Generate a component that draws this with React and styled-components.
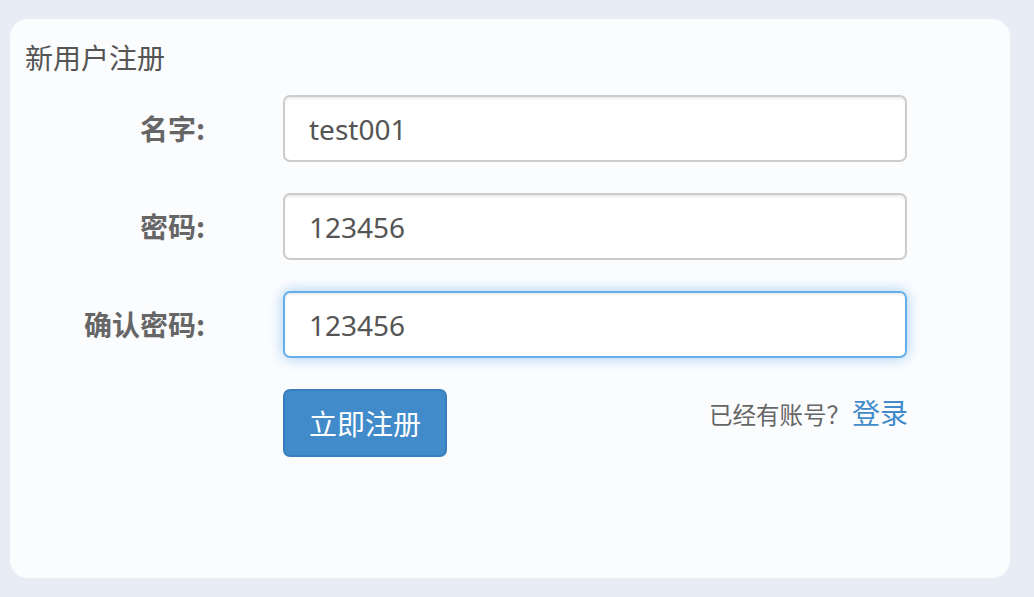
import styled, { createGlobalStyle, css } from 'styled-components'

const GlobalStyle = createGlobalStyle`
  html, body {
    margin: 0;
    padding: 0;
    background: #e8edf5;
  }
  body {
    font-family: "Noto Sans", "Noto Sans CJK SC", sans-serif;
  }
`

const Page = styled.div`
  width: 1034px;
  height: 597px;
  box-sizing: border-box;
  padding: 19px 24px 19px 10px;
`

const Card = styled.div`
  height: 100%;
  box-sizing: border-box;
  background: #fbfcfe;
  border-radius: 18px;
  padding: 18px 15px 0 15px;
`

const Title = styled.div`
  font-family: "Noto Sans CJK SC", sans-serif;
  font-size: 28px;
  line-height: 40px;
  color: #555;
  margin-bottom: 18px;
`

const Form = styled.div`
  display: grid;
  grid-template-columns: 182px 624px;
  column-gap: 76px;
  row-gap: 31px;
`

const Label = styled.label`
  font-family: "Noto Sans CJK SC", sans-serif;
  font-weight: 700;
  font-size: 28px;
  color: #666;
  text-align: right;
  line-height: 67px;
  padding-right: 2px;
`

const Field = styled.input`
  box-sizing: border-box;
  width: 100%;
  height: 67px;
  padding: 0 24px;
  font-family: "Noto Sans", "Noto Sans CJK SC", sans-serif;
  font-size: 28px;
  color: #555;
  background: #fff;
  border: 2px solid #ccc;
  border-radius: 7px;
  outline: none;
  box-shadow: inset 0 2px 2px rgba(0, 0, 0, 0.075);
  ${p => p.$focused && css`
    border-color: #66afe9;
    box-shadow: inset 0 2px 2px rgba(0, 0, 0, 0.075), 0 0 14px rgba(102, 175, 233, 0.6);
  `}
`

const Actions = styled.div`
  display: flex;
  justify-content: space-between;
  align-items: flex-start;
`

const Button = styled.button`
  height: 68px;
  width: 164px;
  padding: 0;
  background: #428bca;
  border: 2px solid #3a7fbd;
  border-radius: 7px;
  color: #fff;
  font-family: "Noto Sans CJK SC", sans-serif;
  font-size: 28px;
  cursor: pointer;
`

const LoginHint = styled.div`
  font-family: "Noto Sans CJK SC", sans-serif;
  font-size: 23.5px;
  color: #666;
  line-height: 40px;
  margin-top: 3px;
  margin-right: -1px;
`

const LoginLink = styled.a`
  font-size: 28px;
  color: #428bca;
  text-decoration: none;
  margin-left: 2px;
`

const fields = [
  { label: '名字:', value: 'test001' },
  { label: '密码:', value: '123456' },
  { label: '确认密码:', value: '123456', focused: true },
]

const App = () => {
  return (
    <Page>
      <GlobalStyle />
      <Card>
        <Title>新用户注册</Title>
        <Form>
          {fields.map(f => (
            <>
              <Label key={f.label + 'l'}>{f.label}</Label>
              <Field key={f.label + 'f'} value={f.value} readOnly $focused={f.focused} />
            </>
          ))}
          <div />
          <Actions>
            <Button>立即注册</Button>
            <LoginHint>
              已经有账号？<LoginLink href="#">登录</LoginLink>
            </LoginHint>
          </Actions>
        </Form>
      </Card>
    </Page>
  )
}

export default App
